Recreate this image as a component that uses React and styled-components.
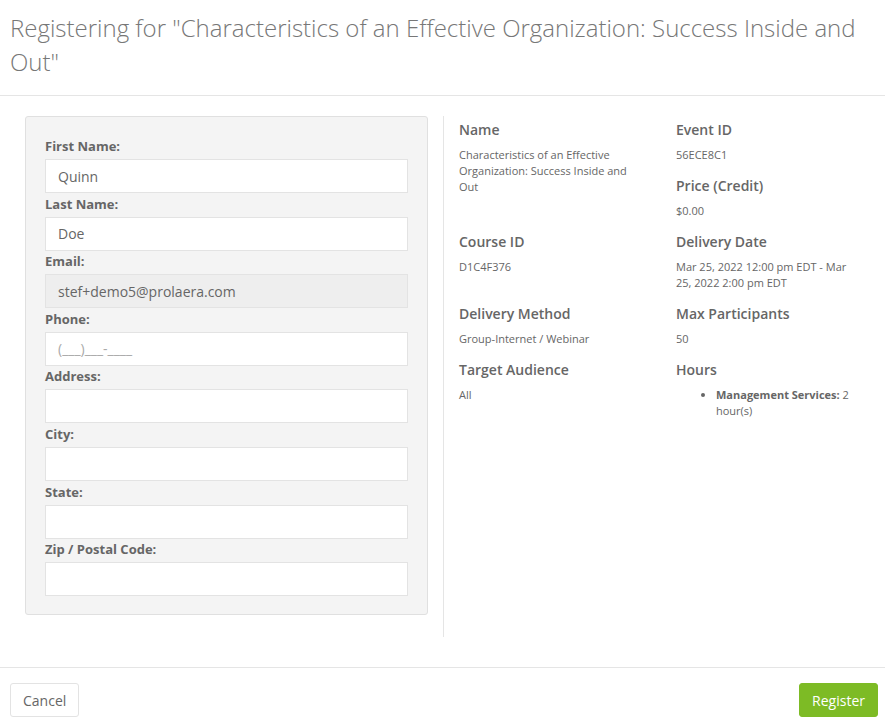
import React from "react";
import styled, { createGlobalStyle } from "styled-components";

const Global = createGlobalStyle`
	html, body {
		margin: 0;
		padding: 0;
		background: #fff;
		font-family: "Open Sans", "Liberation Sans", sans-serif;
		color: #666;
	}
	* {
		box-sizing: border-box;
	}
`;

const Header = styled.header`
	padding: 11px 10px 16px 10px;
	border-bottom: 1px solid #e5e5e5;
	& > h3 {
		margin: 0;
		font-size: 24px;
		font-weight: 300;
		line-height: 34px;
		color: #777;
	}
`;
const Body = styled.section`
	display: grid;
	grid-template-columns: 434px 1fr;
	padding: 20px 0 30px 10px;
	border-bottom: 1px solid #e5e5e5;
`;
const FormCol = styled.div`
	padding: 0 15px;
	border-right: 1px solid #e5e5e5;
`;
const Panel = styled.div`
	background: #f4f4f4;
	border: 1px solid #e0e0e0;
	border-radius: 3px;
	padding: 20px 19px 18px 19px;
	margin-bottom: 22px;
`;
const Field = styled.div`
	margin-bottom: 1.6px;
	&:last-child {
		margin-bottom: 0;
	}
	& > label {
		display: block;
		font-size: 13px;
		font-weight: 700;
		line-height: 18px;
		margin-bottom: 4px;
		color: #666;
	}
`;
const Input = styled.input`
	display: block;
	width: 100%;
	height: 34px;
	padding: 0 12px;
	font-family: "Open Sans", "Liberation Sans", sans-serif;
	font-size: 14px;
	color: #666;
	background: ${(p) => (p.disabled ? "#eeeeee" : "#fff")};
	border: 1px solid #e3e3e3;
	border-radius: 0;
	outline: none;
	&::placeholder {
		color: #aaa;
	}
`;
const InfoCol = styled.div`
	padding: 4px 0 0 15px;
`;
const InfoRow = styled.div`
	display: grid;
	grid-template-columns: 185px 185px;
	column-gap: 32px;
`;
const Item = styled.div`
	margin-bottom: 13px;
	& > h4 {
		margin: 0 0 7px 0;
		font-size: 14px;
		font-weight: 600;
		line-height: 20px;
		color: #666;
	}
	& > p {
		margin: 0;
		font-size: 11px;
		line-height: 16px;
		color: #666;
	}
`;
const Hours = styled.ul`
	margin: 0;
	padding-left: 40px;
	font-size: 11px;
	line-height: 16px;
	color: #666;
	& b {
		font-weight: 700;
	}
`;
const Footer = styled.footer`
	display: flex;
	justify-content: space-between;
	align-items: center;
	padding: 15px 7px 10px 10px;
`;
const Button = styled.button`
	height: 34px;
	padding: 0 12px;
	font-family: "Open Sans", "Liberation Sans", sans-serif;
	font-size: 14px;
	border-radius: 3px;
	border: 1px solid ${(p) => (p.primary ? "#7dbb25" : "#e3e3e3")};
	background: ${(p) => (p.primary ? "#7dbb25" : "#fff")};
	color: ${(p) => (p.primary ? "#fff" : "#666")};
`;

const fields = [
	{ label: "First Name:", value: "Quinn" },
	{ label: "Last Name:", value: "Doe" },
	{ label: "Email:", value: "stef+demo5@prolaera.com", disabled: true },
	{ label: "Phone:", placeholder: "(___)___-____" },
	{ label: "Address:" },
	{ label: "City:" },
	{ label: "State:" },
	{ label: "Zip / Postal Code:" },
];

function Info({ title, children }) {
	return (
		<Item>
			<h4>{title}</h4>
			{children}
		</Item>
	);
}

export default function App() {
	return (
		<>
			<Global />
			<Header>
				<h3>
					Registering for "Characteristics of an Effective Organization: Success Inside and
					Out"
				</h3>
			</Header>
			<Body>
				<FormCol>
					<Panel>
						{fields.map((f) => (
							<Field key={f.label}>
								<label>{f.label}</label>
								<Input
									defaultValue={f.value}
									placeholder={f.placeholder}
									disabled={f.disabled}
								/>
							</Field>
						))}
					</Panel>
				</FormCol>
				<InfoCol>
					<InfoRow>
						<div>
							<Info title="Name">
								<p>Characteristics of an Effective Organization: Success Inside and Out</p>
							</Info>
						</div>
						<div>
							<Info title="Event ID">
								<p>56ECE8C1</p>
							</Info>
							<Info title="Price (Credit)">
								<p>$0.00</p>
							</Info>
						</div>
					</InfoRow>
					<InfoRow>
						<Info title="Course ID">
							<p>D1C4F376</p>
						</Info>
						<Info title="Delivery Date">
							<p>Mar 25, 2022 12:00 pm EDT - Mar 25, 2022 2:00 pm EDT</p>
						</Info>
					</InfoRow>
					<InfoRow>
						<Info title="Delivery Method">
							<p>Group-Internet / Webinar</p>
						</Info>
						<Info title="Max Participants">
							<p>50</p>
						</Info>
					</InfoRow>
					<InfoRow>
						<Info title="Target Audience">
							<p>All</p>
						</Info>
						<Info title="Hours">
							<Hours>
								<li>
									<b>Management Services:</b> 2 hour(s)
								</li>
							</Hours>
						</Info>
					</InfoRow>
				</InfoCol>
			</Body>
			<Footer>
				<Button>Cancel</Button>
				<Button primary>Register</Button>
			</Footer>
		</>
	);
}
